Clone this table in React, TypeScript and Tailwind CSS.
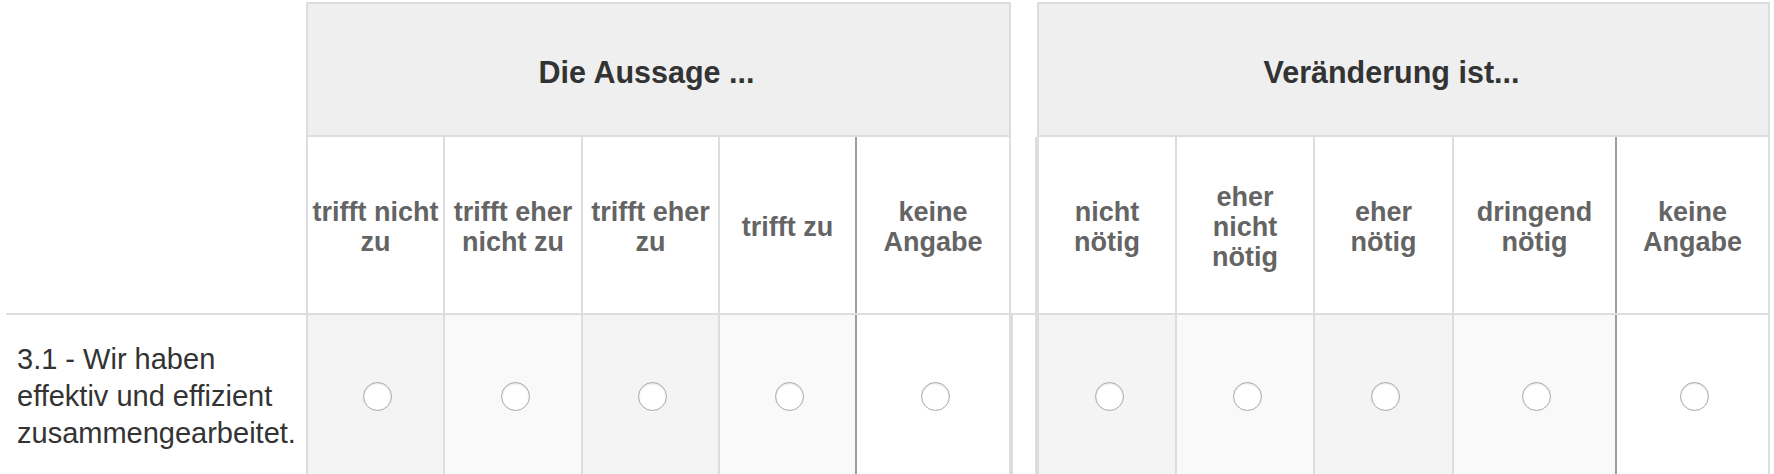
import React from "react";

type Col = { label: string[]; w: string; edge: string; bg: string };

const aussage: Col[] = [
  { label: ["trifft nicht", "zu"], w: "w-[137px]", edge: "border-r-2 border-[#dddddd]", bg: "bg-[#f4f4f4]" },
  { label: ["trifft eher", "nicht zu"], w: "w-[138px]", edge: "border-r-2 border-[#dddddd]", bg: "bg-[#f9f9f9]" },
  { label: ["trifft eher", "zu"], w: "w-[137px]", edge: "border-r-2 border-[#dddddd]", bg: "bg-[#f4f4f4]" },
  { label: ["trifft zu"], w: "w-[135px]", edge: "", bg: "bg-[#f9f9f9]" },
  { label: ["keine", "Angabe"], w: "w-[154px]", edge: "border-l-2 border-[#9d9d9d]", bg: "bg-white" },
];

const veraenderung: Col[] = [
  { label: ["nicht", "nötig"], w: "w-[138px]", edge: "border-r-2 border-[#dddddd]", bg: "bg-[#f4f4f4]" },
  { label: ["eher", "nicht", "nötig"], w: "w-[138px]", edge: "border-r-2 border-[#dddddd]", bg: "bg-[#f9f9f9]" },
  { label: ["eher", "nötig"], w: "w-[139px]", edge: "border-r-2 border-[#dddddd]", bg: "bg-[#f4f4f4]" },
  { label: ["dringend", "nötig"], w: "w-[161px]", edge: "", bg: "bg-[#f9f9f9]" },
  { label: ["keine", "Angabe"], w: "w-[153px]", edge: "border-l-2 border-[#9d9d9d]", bg: "bg-white" },
];

function Radio() {
  return (
    <span className="ml-[4px] mt-[4px] block h-[29px] w-[29px] rounded-full border border-[#a8a8a8] bg-white shadow-[inset_0_1px_2px_rgba(0,0,0,0.12)]" />
  );
}

function Group({ title, cols }: { title: string; cols: Col[] }) {
  return (
    <div className="flex flex-col border-x-2 border-[#dddddd]">
      {/* group title */}
      <div className="flex h-[136px] items-center justify-center border-y-2 border-[#dddddd] bg-[#efefef] pr-[24px] pt-[7px] text-[30.5px] font-bold text-[#333333]">
        {title}
      </div>

      {/* answer labels */}
      <div className="flex h-[176px]">
        {cols.map((c, i) => (
          <div
            key={i}
            className={`${c.w} ${c.edge} flex shrink-0 flex-col items-center justify-center pt-[4px] text-center text-[27px] font-bold leading-[30px] text-[#646464]`}
          >
            {c.label.map((l) => (
              <span key={l}>{l}</span>
            ))}
          </div>
        ))}
      </div>

      {/* radio row */}
      <div className="flex h-[162px] border-t-2 border-[#dddddd]">
        {cols.map((c, i) => (
          <div key={i} className={`${c.w} ${c.edge} ${c.bg} flex shrink-0 items-center justify-center`}>
            <Radio />
          </div>
        ))}
      </div>
    </div>
  );
}

export default function App() {
  return (
    <div
      className="flex h-[474px] w-[1774px] overflow-hidden bg-white pt-[2px]"
      style={{ fontFamily: '"Liberation Sans", Arial, sans-serif' }}
    >
      {/* question column */}
      <div className="flex w-[306px] shrink-0 flex-col">
        <div className="h-[312px]" />
        <div className="ml-[6px] flex h-[162px] items-center border-t-2 border-[#dddddd] pl-[11px] pt-[4px] text-[29px] leading-[37px] text-[#333333]">
          <p>
            3.1 - Wir haben
            <br />
            effektiv und effizient
            <br />
            zusammengearbeitet.
          </p>
        </div>
      </div>

      <Group title="Die Aussage ..." cols={aussage} />

      {/* spacer between the two scales */}
      <div className="flex w-[26px] shrink-0 flex-col">
        <div className="h-[136px]" />
        <div className="h-[176px] border-r-2 border-[#dddddd]" />
        <div className="h-[162px] border-x-2 border-t-2 border-[#dddddd]" />
      </div>

      <Group title="Veränderung ist..." cols={veraenderung} />
    </div>
  );
}
